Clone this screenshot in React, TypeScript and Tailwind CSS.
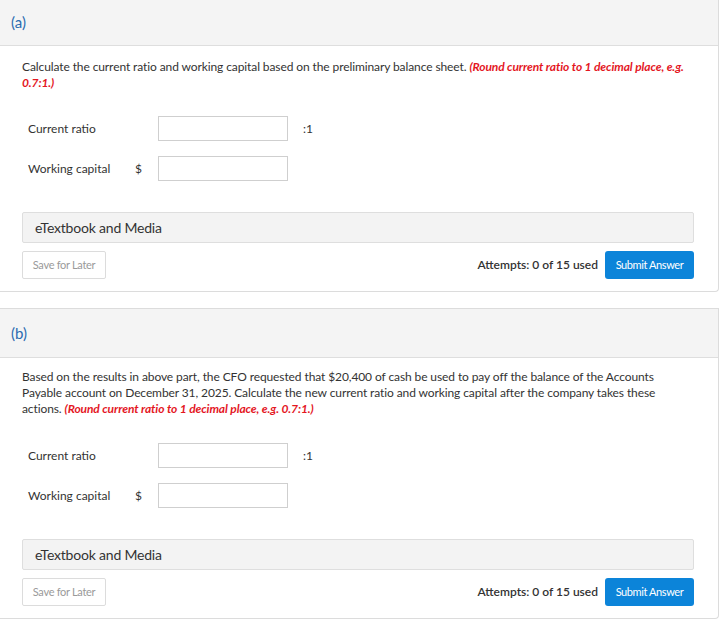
import type { ReactNode } from 'react'

interface PartProps {
  label: string
  children: ReactNode
  headerClass: string
  textTop: string
  rowsTop: string
}

function Part({ label, children, headerClass, textTop, rowsTop }: PartProps) {
  return (
    <div className="w-[719px] border-r border-b border-[#dcdcdc] rounded-br-[4px] bg-white">
      <div className={`flex items-center bg-[#f4f4f4] border-b border-[#dedede] pl-[11px] text-[15px] text-[#2b6cb0] ${headerClass}`}>
        {label}
      </div>
      <div className="pl-[22px] pr-[24px] pb-[12px]">
        <p className={`text-[12px] leading-[16px] text-[#333] tracking-[-0.1px] ${textTop}`}>{children}</p>
        <div className={`flex flex-col gap-[15px] pl-[6px] text-[12px] text-[#333] ${rowsTop}`}>
          <div className="flex items-center">
            <span className="w-[130px]">Current ratio</span>
            <div className="h-[25px] w-[130px] border border-[#cfcfcf] bg-white" />
            <span className="ml-[15px]">:1</span>
          </div>
          <div className="flex items-center">
            <span className="w-[107px]">Working capital</span>
            <span className="w-[23px]">$</span>
            <div className="h-[25px] w-[130px] border border-[#cfcfcf] bg-white" />
          </div>
        </div>
        <div className="mt-[31px] flex h-[31px] items-center rounded-[2px] border border-[#dedede] bg-[#f3f3f3] pl-[12px] text-[14px] text-[#333] tracking-[-0.2px]">
          eTextbook and Media
        </div>
        <div className="mt-[8px] flex items-center justify-between">
          <button
            type="button"
            className="h-[28px] w-[84px] rounded-[2px] border border-[#dcdcdc] bg-white text-[11px] text-[#9a9a9a] tracking-[-0.3px]"
          >
            Save for Later
          </button>
          <div className="flex items-center gap-[7px]">
            <span className="text-[12px] font-semibold text-[#333]">Attempts: 0 of 15 used</span>
            <button
              type="button"
              className="h-[28px] w-[89px] rounded-[3px] bg-[#0c84d9] text-[11px] text-white tracking-[-0.4px]"
            >
              Submit Answer
            </button>
          </div>
        </div>
      </div>
    </div>
  )
}

export default function App() {
  return (
    <div className="min-h-screen bg-white font-['Lato','Noto_Sans',sans-serif] overflow-hidden">
      <Part label="(a)" headerClass="h-[46px]" textTop="pt-[13px]" rowsTop="mt-[25px]">
        Calculate the current ratio and working capital based on the preliminary balance sheet.{' '}
        <em className="font-bold text-[#e4171f]">(Round current ratio to 1 decimal place, e.g. 0.7:1.)</em>
      </Part>
      <div className="mt-[16px] w-[719px] border-t border-[#dcdcdc]" />
      <Part label="(b)" headerClass="h-[49px]" textTop="pt-[11px]" rowsTop="mt-[26px]">
        Based on the results in above part, the CFO requested that $20,400 of cash be used to pay off the balance of the
        Accounts Payable account on December 31, 2025. Calculate the new current ratio and working capital after the
        company takes these actions.{' '}
        <em className="font-bold text-[#e4171f]">(Round current ratio to 1 decimal place, e.g. 0.7:1.)</em>
      </Part>
    </div>
  )
}
